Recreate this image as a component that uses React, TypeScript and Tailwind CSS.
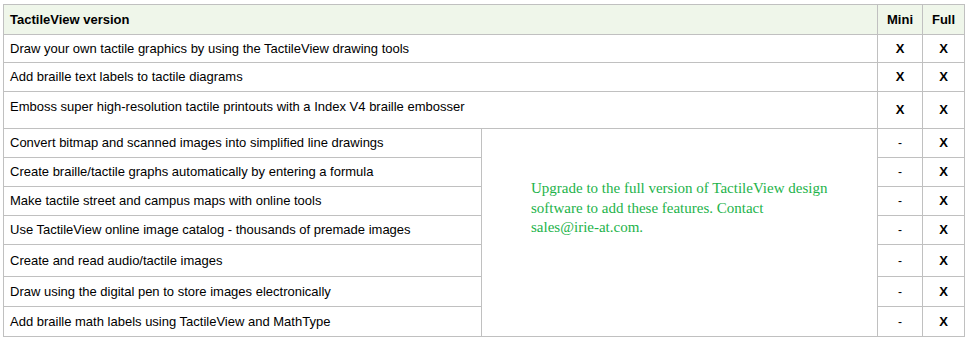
import React from "react";

type Feature = { label: string; mini: string; full: string; h: string; pad?: string };

const baseFeatures: Feature[] = [
  { label: "Draw your own tactile graphics by using the TactileView drawing tools", mini: "X", full: "X", h: "h-[28px]" },
  { label: "Add braille text labels to tactile diagrams", mini: "X", full: "X", h: "h-[29px]" },
  {
    label: "Emboss super high-resolution tactile printouts with a Index V4 braille embosser",
    mini: "X",
    full: "X",
    h: "h-[37px]",
    pad: "pb-[7px]",
  },
];

const fullFeatures: Feature[] = [
  { label: "Convert bitmap and scanned images into simplified line drawings", mini: "-", full: "X", h: "h-[29px]" },
  { label: "Create braille/tactile graphs automatically by entering a formula", mini: "-", full: "X", h: "h-[29px]" },
  { label: "Make tactile street and campus maps with online tools", mini: "-", full: "X", h: "h-[29px]" },
  { label: "Use TactileView online image catalog - thousands of premade images", mini: "-", full: "X", h: "h-[29px]" },
  { label: "Create and read audio/tactile images", mini: "-", full: "X", h: "h-[32px]" },
  { label: "Draw using the digital pen to store images electronically", mini: "-", full: "X", h: "h-[30px]" },
  { label: "Add braille math labels using TactileView and MathType", mini: "-", full: "X", h: "h-[30px]" },
];

const cell = "border border-[#c0c0c0] p-0";
const labelCell = `${cell} pl-[6px] text-[13px] text-black align-middle`;
const markCell = `${cell} text-center align-middle text-[13px] font-bold text-black`;

const Mark = ({ value }: { value: string }) =>
  value === "-" ? <span className="text-[12px] font-normal">-</span> : <span>{value}</span>;

const App = () => {
  return (
    <div className="w-[968px] h-[340px] bg-white pt-[4px] pl-[3px] font-['Liberation_Sans',Arial,sans-serif]">
      <table className="border-collapse table-fixed w-[961px]">
        <colgroup>
          <col className="w-[478px]" />
          <col className="w-[396px]" />
          <col className="w-[45px]" />
          <col className="w-[42px]" />
        </colgroup>
        <thead>
          <tr className="h-[30px] bg-[#eff6ea]">
            <th colSpan={2} className={`${cell} pl-[6px] text-left text-[13px] font-bold text-black`}>
              TactileView version
            </th>
            <th className={`${cell} text-center text-[13px] font-bold text-black`}>Mini</th>
            <th className={`${cell} text-center text-[13px] font-bold text-black`}>Full</th>
          </tr>
        </thead>
        <tbody>
          {baseFeatures.map((f) => (
            <tr key={f.label} className={f.h}>
              <td colSpan={2} className={`${labelCell} ${f.pad ?? ""}`}>
                {f.label}
              </td>
              <td className={markCell}>
                <Mark value={f.mini} />
              </td>
              <td className={markCell}>
                <Mark value={f.full} />
              </td>
            </tr>
          ))}
          {fullFeatures.map((f, i) => (
            <tr key={f.label} className={f.h}>
              <td className={labelCell}>{f.label}</td>
              {i === 0 && (
                <td
                  rowSpan={fullFeatures.length}
                  className={`${cell} align-top pt-[50px] pl-[49px] font-['Liberation_Serif','Times_New_Roman',serif] text-[15px] leading-[19.5px] text-[#1db34a]`}
                >
                  Upgrade to the full version of TactileView design
                  <br />
                  software to add these features. Contact
                  <br />
                  sales@irie-at.com.
                </td>
              )}
              <td className={markCell}>
                <Mark value={f.mini} />
              </td>
              <td className={markCell}>
                <Mark value={f.full} />
              </td>
            </tr>
          ))}
        </tbody>
      </table>
    </div>
  );
};

export default App;
